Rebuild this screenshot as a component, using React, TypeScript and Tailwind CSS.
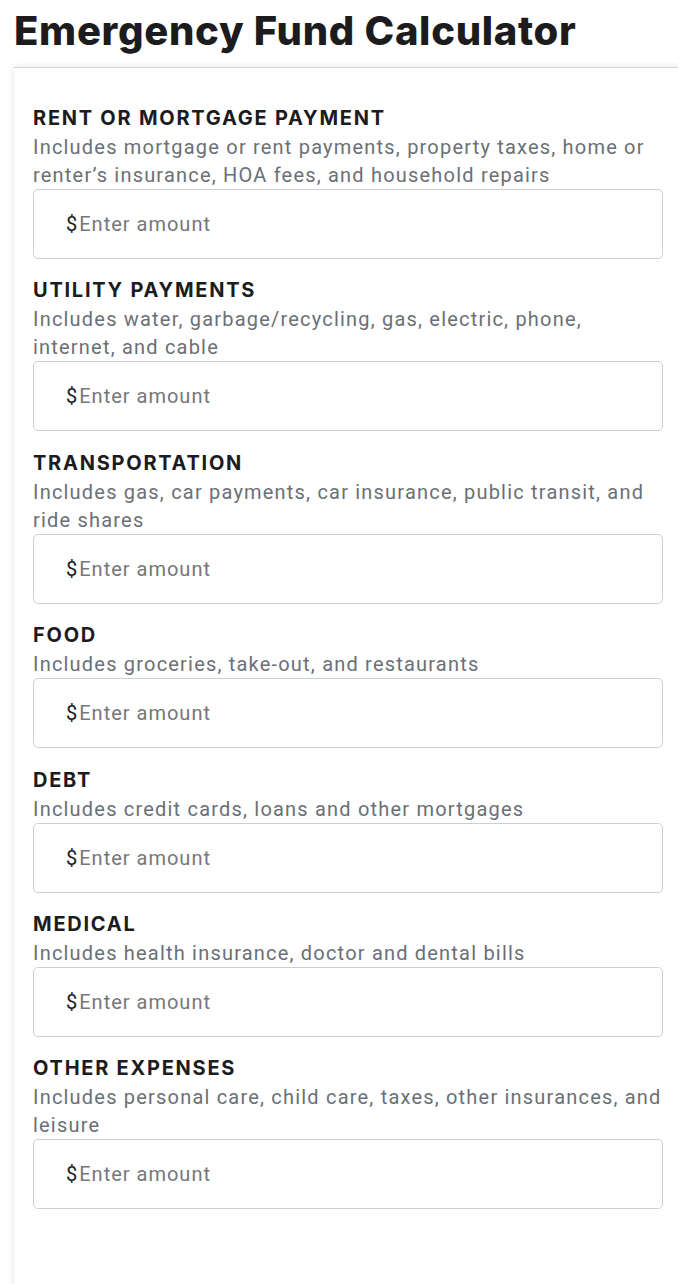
import React from 'react';

interface Expense {
  id: string;
  label: string;
  help: string;
}

const expenses: Expense[] = [
  {
    id: 'rent',
    label: 'Rent or mortgage payment',
    help: 'Includes mortgage or rent payments, property taxes, home or renter’s insurance, HOA fees, and household repairs',
  },
  {
    id: 'utility',
    label: 'Utility payments',
    help: 'Includes water, garbage/recycling, gas, electric, phone, internet, and cable',
  },
  {
    id: 'transportation',
    label: 'Transportation',
    help: 'Includes gas, car payments, car insurance, public transit, and ride shares',
  },
  { id: 'food', label: 'Food', help: 'Includes groceries, take-out, and restaurants' },
  { id: 'debt', label: 'Debt', help: 'Includes credit cards, loans and other mortgages' },
  { id: 'medical', label: 'Medical', help: 'Includes health insurance, doctor and dental bills' },
  {
    id: 'other',
    label: 'Other expenses',
    help: 'Includes personal care, child care, taxes, other insurances, and leisure',
  },
];

const AmountField: React.FC<Expense> = ({ id, label, help }) => (
  <div className="flex flex-col">
    <label
      htmlFor={id}
      className="font-['Inter',sans-serif] text-[20px] font-bold uppercase leading-[30px] tracking-[1.75px] text-[#1c1c1e]"
    >
      {label}
    </label>
    <p className="font-['Roboto',sans-serif] text-[20px] leading-[28px] tracking-[1.2px] text-[#6b6f76]">{help}</p>
    {/* Input with a $ prefix */}
    <div className="flex h-[70px] items-center rounded-[5px] border border-[#cfcfcf] bg-white pl-[32px]">
      <span className="font-['Roboto',sans-serif] text-[20px] text-[#1c1c1e]">$</span>
      <input
        id={id}
        type="text"
        inputMode="decimal"
        placeholder="Enter amount"
        className="w-full bg-transparent pl-[2px] font-['Roboto',sans-serif] text-[20px] tracking-[1px] text-[#1c1c1e] outline-none placeholder:text-[#75777b]"
      />
    </div>
  </div>
);

export default function App() {
  return (
    <div className="min-h-[1284px] w-[678px] overflow-hidden bg-white">
      <h1 className="px-[14px] pt-[7px] font-['Inter',sans-serif] text-[40px] font-extrabold leading-[48px] tracking-[0.7px] text-[#1c1c1e]">
        Emergency Fund Calculator
      </h1>
      <div className="mt-[12px] ml-[14px] w-[680px] border-t border-[#d4d6d8] bg-white pt-[35px] pb-[100px] pl-[19px] shadow-[0_0_6px_rgba(0,0,0,0.12)]">
        <div className="flex w-[630px] flex-col gap-[16.4px]">
          {expenses.map((e) => (
            <AmountField key={e.id} {...e} />
          ))}
        </div>
      </div>
    </div>
  );
}
